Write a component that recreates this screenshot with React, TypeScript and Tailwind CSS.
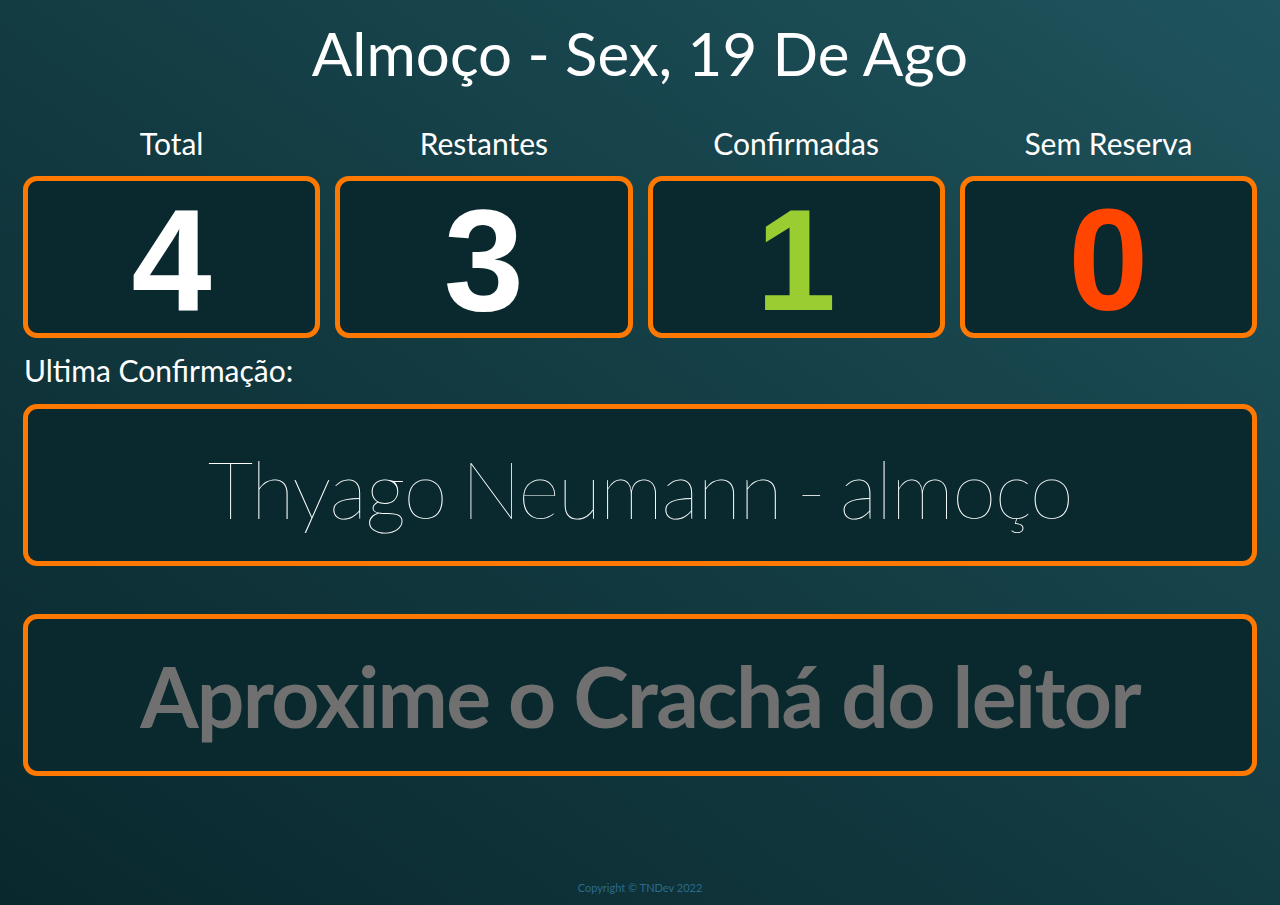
import React from "react";

const stats = [
  { label: "Total", value: "4", color: "text-white" },
  { label: "Restantes", value: "3", color: "text-white" },
  { label: "Confirmadas", value: "1", color: "text-[#9acd32]" },
  { label: "Sem Reserva", value: "0", color: "text-[#ff4500]" },
];

const lato = { fontFamily: "Lato, 'Noto Sans', sans-serif" };

export default function App() {
  return (
    <div
      className="min-h-screen w-full flex flex-col bg-[linear-gradient(to_top_right,#09282d_0%,#133b42_50%,#1f545d_100%)] text-white"
      style={lato}
    >
      <div className="px-[23px] pt-[17px]">
        {/* Title */}
        <h1 className="text-center text-[60px] leading-[72px] font-normal">
          Almoço - Sex, 19 De Ago
        </h1>

        {/* Stats */}
        <div className="mt-[36px] grid grid-cols-4 gap-[15px]">
          {stats.map((s) => (
            <div key={s.label} className="flex flex-col">
              <p className="text-center text-[30px] leading-[36px]">{s.label}</p>
              <div className="mt-[15px] h-[162px] rounded-[14px] border-[5px] border-[#ff7800] bg-[#09292e] flex items-center justify-center pt-[8px]">
                <span
                  className={`text-[144px] leading-none font-bold ${s.color}`}
                  style={{ fontFamily: "'Liberation Sans', Arial, sans-serif" }}
                >
                  {s.value}
                </span>
              </div>
            </div>
          ))}
        </div>

        {/* Last confirmation */}
        <p className="mt-[14px] text-[30px] leading-[36px] pl-px">Ultima Confirmação:</p>
        <div className="mt-[16px] h-[162px] rounded-[14px] border-[5px] border-[#ff7800] bg-[#09292e] flex items-center justify-center pt-[6px]">
          <span className="text-[80px] leading-none font-thin tracking-[-1.6px] [word-spacing:-6px] text-white">
            Thyago Neumann - almoço
          </span>
        </div>

        {/* Reader prompt */}
        <div className="mt-[48px] h-[162px] rounded-[14px] border-[5px] border-[#ff7800] bg-[#09292e] flex items-center justify-center pt-[2px]">
          <span className="text-[84px] leading-none font-bold tracking-[-1.7px] text-[#707070]">
            Aproxime o Crachá do leitor
          </span>
        </div>
      </div>

      <footer className="mt-auto pb-[11px] text-center text-[11px] leading-[13px] text-[#2c6b8c]">
        Copyright © TNDev 2022
      </footer>
    </div>
  );
}
